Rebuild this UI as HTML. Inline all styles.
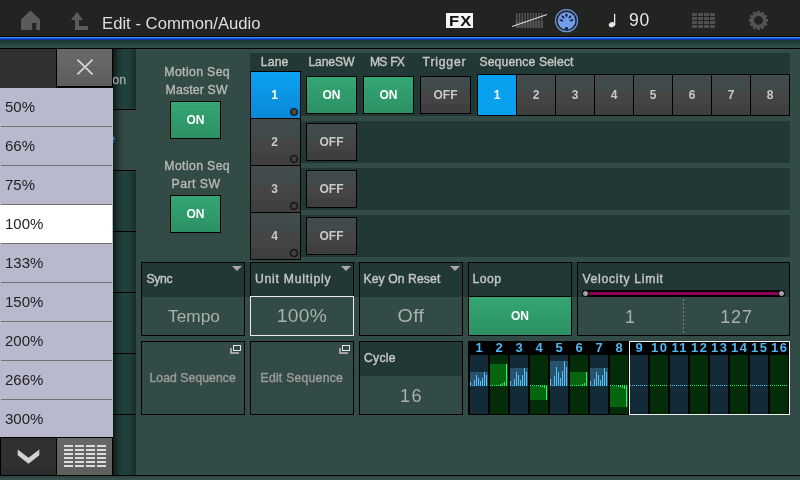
<!DOCTYPE html>
<html>
<head>
<meta charset="utf-8">
<title>Edit - Common/Audio</title>
<style>
*{box-sizing:border-box;margin:0;padding:0}
html,body{width:800px;height:480px;overflow:hidden;background:#324b47;font-family:"Liberation Sans",sans-serif;}
.a{position:absolute}
.t{position:absolute;white-space:nowrap;line-height:1}
#hdr{left:0;top:0;width:800px;height:36px;background:#222421}
#hl1{left:0;top:36px;width:800px;height:1px;background:#000}
#hl2{left:0;top:37px;width:800px;height:3px;background:linear-gradient(#4a93f5,#1d63e6 45%,#07178a)}
#hl3{left:0;top:40px;width:800px;height:8px;background:linear-gradient(#1d362f,#2f4f4b)}
#hl4{left:0;top:48px;width:800px;height:1px;background:#000}
#bot1{left:0;top:475px;width:800px;height:1px;background:#000}
#bot2{left:0;top:476px;width:800px;height:4px;background:linear-gradient(#2b4440,#3a5350)}
/* tab column */
.tab{left:113px;width:23px;height:60px;background:linear-gradient(90deg,#0f1a18 0%,#1b3531 22%,#21413c 45%,#21403c 65%,#1d3733 85%,#172b28 100%)}
.tabl{left:113px;width:23px;height:1px;background:#000}
/* buttons */
.btn{position:absolute;border:1px solid #000;color:#fff;font-weight:bold;font-size:12px;text-align:center}
.gray{background:linear-gradient(#434c4d 0%,#40494a 42%,#454644 45%,#434443 73%,#3f403f 76%,#3e3e3e 100%);color:#c9c9c9}
.green{background:linear-gradient(#34a773,#2c9063)}
.blue{background:linear-gradient(#0ba2f2,#0a88d6)}
.panel{background:#213837}
.box{position:absolute;border:1px solid #000;background:#324b47}
.box .h{position:absolute;left:0;top:0;right:0;height:34px;background:#213837}
.lbl{color:#c6c6c2;-webkit-text-stroke:.4px #c6c6c2;font-weight:normal;font-size:12.2px}
.val{color:#a9b0ac;font-size:18px;letter-spacing:.8px}
.li{left:0;width:113px;height:38px;background:#b8b9cc}
.ls{left:1px;width:111px;height:1px;background:#707070}
.lt{left:5px;font-size:15px;color:#222}

.lbl2{-webkit-text-stroke:.35px #b9b9b4;color:#b9b9b4;font-size:12.3px;letter-spacing:.45px;text-align:center}
.lane{color:#fff;font-weight:bold;font-size:12px;text-align:center;line-height:46px;padding-right:2px}
.lane.gray{color:#c9c9c9}
.dot{position:absolute;right:2px;bottom:2px;width:8px;height:8px;border-radius:50%;border:1px solid #000;background:transparent}
.sq{top:75px;width:38px;height:40px;font-weight:bold;font-size:12px;text-align:center;line-height:40px;color:#fff}
.sq.gray{color:#c9c9c9}
.tri{position:absolute;right:2px;top:3px;width:0;height:0;border-left:5px solid transparent;border-right:5px solid transparent;border-top:5px solid #aaa8aa}
.knob{width:7px;height:7px;border-radius:50%;background:#a6a6a6;border:1px solid #000}
.pop{position:absolute;left:88px;top:3px}
.dim{color:#9b9b9b;-webkit-text-stroke:.4px #9b9b9b}
.sn{font-size:13px;font-weight:bold;color:#4fb8f2;text-align:center}
</style>
</head>
<body><div id="root" style="position:absolute;left:0;top:0;width:800px;height:480px;will-change:transform">
<!-- header -->
<div class="a" id="hdr"></div>
<div class="a" id="hl1"></div>
<div class="a" id="hl2"></div>
<div class="a" id="hl3"></div>
<div class="a" id="hl4"></div>
<div class="a" id="bot1"></div>
<div class="a" id="bot2"></div>

<svg class="a" style="left:0;top:0" width="800" height="37" viewBox="0 0 800 37">
  <!-- home -->
  <path d="M30.5 10.5 L40 19.5 V30 H36.2 V23 H32.2 V30 H21 V19.5 Z" fill="#5a5c59"/>
  <!-- up arrow -->
  <path d="M77 11.8 L83 20 H79 V26 H88 V30 H75 V20 H71 Z" fill="#5a5c59"/>
  <!-- FX -->
  <rect x="446" y="13" width="27" height="15" fill="#f4f4f4"/>
  <!-- keyboard icon -->
  <g fill="#535553"><rect x="516.00" y="13" width="1.5" height="8"/><rect x="515.70" y="21" width="2.2" height="7"/><rect x="518.78" y="13" width="1.5" height="8"/><rect x="518.48" y="21" width="2.2" height="7"/><rect x="521.56" y="13" width="1.5" height="8"/><rect x="521.26" y="21" width="2.2" height="7"/><rect x="524.34" y="13" width="1.5" height="8"/><rect x="524.04" y="21" width="2.2" height="7"/><rect x="527.12" y="13" width="1.5" height="8"/><rect x="526.82" y="21" width="2.2" height="7"/><rect x="529.90" y="13" width="1.5" height="8"/><rect x="529.60" y="21" width="2.2" height="7"/><rect x="532.68" y="13" width="1.5" height="8"/><rect x="532.38" y="21" width="2.2" height="7"/><rect x="535.46" y="13" width="1.5" height="8"/><rect x="535.16" y="21" width="2.2" height="7"/><rect x="538.24" y="13" width="1.5" height="8"/><rect x="537.94" y="21" width="2.2" height="7"/><rect x="541.02" y="13" width="1.5" height="8"/><rect x="540.72" y="21" width="2.2" height="7"/></g>
  <line x1="512" y1="26.5" x2="547" y2="14.5" stroke="#d8d8d8" stroke-width="1.3"/>
  <!-- midi -->
  <circle cx="566.5" cy="20.7" r="11" fill="none" stroke="#6797e2" stroke-width="1.2"/>
  <circle cx="566.5" cy="20.7" r="8.8" fill="#6f9fec"/>
  <g fill="#141c33">
    <polygon points="566.50,12.80 567.65,15.30 566.50,17.80 565.35,15.30"/><polygon points="561.33,15.14 563.85,16.23 564.67,18.86 562.15,17.77"/><polygon points="571.67,15.14 570.85,17.77 568.33,18.86 569.15,16.23"/><polygon points="559.12,19.56 561.76,19.21 563.68,21.04 561.04,21.39"/><polygon points="573.88,19.56 571.96,21.39 569.32,21.04 571.24,19.21"/>
    <rect x="564.9" y="27.3" width="3.1" height="2.3"/>
  </g>
  <!-- note -->
  <ellipse cx="612" cy="24.6" rx="3.3" ry="2.5" fill="#e6e6e6" transform="rotate(-20 612 24.6)"/>
  <rect x="614" y="13.8" width="1.3" height="11" fill="#e6e6e6"/>
  <!-- grid -->
  <g fill="#4e504e">
    <rect x="692" y="13" width="5" height="3"/><rect x="698" y="13" width="5" height="3"/><rect x="704" y="13" width="5" height="3"/><rect x="710" y="13" width="5" height="3"/>
    <rect x="692" y="17" width="5" height="3"/><rect x="698" y="17" width="5" height="3"/><rect x="704" y="17" width="5" height="3"/><rect x="710" y="17" width="5" height="3"/>
    <rect x="692" y="21" width="5" height="3"/><rect x="698" y="21" width="5" height="3"/><rect x="704" y="21" width="5" height="3"/><rect x="710" y="21" width="5" height="3"/>
    <rect x="692" y="25" width="5" height="3"/><rect x="698" y="25" width="5" height="3"/><rect x="704" y="25" width="5" height="3"/><rect x="710" y="25" width="5" height="3"/>
  </g>
  <!-- gear -->
  <g transform="translate(758.5 20.4)">
    <circle r="6.3" fill="none" stroke="#525452" stroke-width="3.6"/>
    <g fill="#525452">
      <rect x="-1.4" y="-9.6" width="2.8" height="3"/>
      <rect x="-1.4" y="-9.6" width="2.8" height="3" transform="rotate(30)"/>
      <rect x="-1.4" y="-9.6" width="2.8" height="3" transform="rotate(60)"/>
      <rect x="-1.4" y="-9.6" width="2.8" height="3" transform="rotate(90)"/>
      <rect x="-1.4" y="-9.6" width="2.8" height="3" transform="rotate(120)"/>
      <rect x="-1.4" y="-9.6" width="2.8" height="3" transform="rotate(150)"/>
      <rect x="-1.4" y="-9.6" width="2.8" height="3" transform="rotate(180)"/>
      <rect x="-1.4" y="-9.6" width="2.8" height="3" transform="rotate(210)"/>
      <rect x="-1.4" y="-9.6" width="2.8" height="3" transform="rotate(240)"/>
      <rect x="-1.4" y="-9.6" width="2.8" height="3" transform="rotate(270)"/>
      <rect x="-1.4" y="-9.6" width="2.8" height="3" transform="rotate(300)"/>
      <rect x="-1.4" y="-9.6" width="2.8" height="3" transform="rotate(330)"/>
    </g>
  </g>
</svg>
<div class="t" id="title" style="left:102px;top:16px;font-size:16.7px;color:#dedede">Edit - Common/Audio</div>
<div class="t" id="fx" style="left:448.6px;top:12.6px;font-size:15.3px;font-weight:bold;color:#111;letter-spacing:1px;transform:scaleX(1.08);transform-origin:0 0">FX</div>
<div class="t" id="tempo" style="left:629px;top:12px;font-size:17.5px;letter-spacing:0.8px;color:#e8e8e8">90</div>

<!-- tab column behind popup -->
<div class="a tab" style="top:49px"></div>
<div class="a tabl" style="top:109px"></div>
<div class="a" style="left:113px;top:110px;width:10px;height:60px;background:linear-gradient(90deg,#16231f,#324b47)"></div>
<div class="a tabl" style="top:170px"></div>
<div class="a tab" style="top:171px"></div>
<div class="a tabl" style="top:231px"></div>
<div class="a tab" style="top:232px"></div>
<div class="a tabl" style="top:292px"></div>
<div class="a tab" style="top:293px"></div>
<div class="a tabl" style="top:353px"></div>
<div class="a tab" style="top:354px"></div>
<div class="a tabl" style="top:414px"></div>
<div class="a tab" style="top:415px"></div>
<div class="t" style="left:112.3px;top:73.5px;font-size:12.4px;color:#a0a5a1;-webkit-text-stroke:.3px #a0a5a1">on</div>
<div class="t" style="left:108px;top:132px;font-size:13px;color:#2f8fd0">e</div>

<!-- popup list -->
<div class="a" style="left:0;top:49px;width:56px;height:38px;background:#303030"></div>
<div class="a" style="left:56px;top:49px;width:57px;height:38px;background:#000"></div>
<div class="a" style="left:57px;top:49px;width:55px;height:37px;background:linear-gradient(#666866 0%,#656765 47%,#636263 49%,#636263 73%,#5f605e 75%,#5f605e 100%)"></div>
<div class="a" style="left:0;top:87px;width:56px;height:1px;background:#2e2e2e"></div><div class="a" style="left:56px;top:87px;width:57px;height:1px;background:#0a0a0a"></div>
<svg class="a" style="left:57px;top:49px" width="55" height="37" viewBox="0 0 55 37"><path d="M20.4 10.6 L35.6 25.4 M35.6 10.6 L20.4 25.4" stroke="#d4d4d4" stroke-width="1.8" fill="none"/></svg>

<div class="a" style="left:0;top:88px;width:113px;height:349px;background:#b8b9cc"></div>
<div class="a" style="left:0;top:205px;width:112px;height:38px;background:#fff"></div>
<div class="a ls" style="top:126px"></div>
<div class="a ls" style="top:165px"></div>
<div class="a ls" style="top:204px"></div>
<div class="a ls" style="top:243px"></div>
<div class="a ls" style="top:282px"></div>
<div class="a ls" style="top:321px"></div>
<div class="a ls" style="top:360px"></div>
<div class="a ls" style="top:399px"></div>
<div class="t lt" style="top:99px">50%</div>
<div class="t lt" style="top:138px">66%</div>
<div class="t lt" style="top:177px">75%</div>
<div class="t lt" style="top:216px">100%</div>
<div class="t lt" style="top:255px">133%</div>
<div class="t lt" style="top:294px">150%</div>
<div class="t lt" style="top:333px">200%</div>
<div class="t lt" style="top:372px">266%</div>
<div class="t lt" style="top:411px">300%</div>

<div class="a" style="left:0;top:437px;width:113px;height:38px;background:#000"></div>
<div class="a" style="left:1px;top:438px;width:55px;height:37px;background:linear-gradient(#303030 0%,#303030 84%,#2b2b2b 86%,#2b2b2b 100%)"></div>
<div class="a" style="left:57px;top:438px;width:55px;height:37px;background:linear-gradient(#666866 0%,#656765 47%,#636263 49%,#636263 73%,#5f605e 75%,#5f605e 100%)"></div>
<svg class="a" style="left:0;top:438px" width="113" height="37" viewBox="0 0 113 37">
  <path d="M17.7 11.6 L28.5 19.8 L39.3 11.6 V17.3 L28.5 25.8 L17.7 17.3 Z" fill="#d2d2d2"/>
  <g fill="#dcdcdc">
    <rect x="64" y="7" width="9" height="2"/><rect x="75" y="7" width="9" height="2"/><rect x="86" y="7" width="9" height="2"/><rect x="97" y="7" width="9" height="2"/>
    <rect x="64" y="11" width="9" height="2"/><rect x="75" y="11" width="9" height="2"/><rect x="86" y="11" width="9" height="2"/><rect x="97" y="11" width="9" height="2"/>
    <rect x="64" y="15" width="9" height="2"/><rect x="75" y="15" width="9" height="2"/><rect x="86" y="15" width="9" height="2"/><rect x="97" y="15" width="9" height="2"/>
    <rect x="64" y="19" width="9" height="2"/><rect x="75" y="19" width="9" height="2"/><rect x="86" y="19" width="9" height="2"/><rect x="97" y="19" width="9" height="2"/>
    <rect x="64" y="23" width="9" height="2"/><rect x="75" y="23" width="9" height="2"/><rect x="86" y="23" width="9" height="2"/><rect x="97" y="23" width="9" height="2"/>
    <rect x="64" y="27" width="9" height="2"/><rect x="75" y="27" width="9" height="2"/><rect x="86" y="27" width="9" height="2"/><rect x="97" y="27" width="9" height="2"/>
  </g>
</svg>

<!-- MAIN -->
<div class="a" style="left:136px;top:49px;width:664px;height:3px;background:linear-gradient(#37534e,#324b47)"></div>
<!-- labels left -->
<div class="t lbl2" style="left:147.2px;width:100px;top:66px;letter-spacing:.35px">Motion Seq</div>
<div class="t lbl2" style="left:146.6px;width:100px;top:84px;letter-spacing:.15px">Master SW</div>
<div class="btn green" style="left:170px;top:101px;width:51px;height:38px;line-height:36px">ON</div>
<div class="t lbl2" style="left:147.2px;width:100px;top:160px;letter-spacing:.35px">Motion Seq</div>
<div class="t lbl2" style="left:146px;width:100px;top:178px">Part SW</div>
<div class="btn green" style="left:170px;top:195px;width:51px;height:38px;line-height:36px">ON</div>

<!-- lane panel rows -->
<div class="a panel" style="left:250px;top:53px;width:540px;height:63px"></div>
<div class="a panel" style="left:250px;top:121px;width:540px;height:42px"></div>
<div class="a panel" style="left:250px;top:168px;width:540px;height:42px"></div>
<div class="a panel" style="left:250px;top:215px;width:540px;height:42px"></div>

<div class="t lbl" style="left:260.7px;top:56.2px;letter-spacing:.2px">Lane</div>
<div class="t lbl" style="left:308.4px;top:56.2px;letter-spacing:-.15px">LaneSW</div>
<div class="t lbl" style="left:369.9px;top:56.2px;letter-spacing:-.9px;word-spacing:1.4px">MS FX</div>
<div class="t lbl" style="left:422.6px;top:56.2px;letter-spacing:.8px">Trigger</div>
<div class="t lbl" style="left:479.4px;top:56.2px;letter-spacing:.14px">Sequence Select</div>

<div class="a" style="left:250px;top:71px;width:51px;height:189px;background:#000"></div>
<div class="a blue lane" style="left:251px;top:72px;width:49px;height:46px"><span>1</span><i class="dot" style="background:#484848"></i></div>
<div class="a gray lane" style="left:251px;top:119px;width:49px;height:46px"><span>2</span><i class="dot"></i></div>
<div class="a gray lane" style="left:251px;top:166px;width:49px;height:46px"><span>3</span><i class="dot"></i></div>
<div class="a gray lane" style="left:251px;top:213px;width:49px;height:46px"><span>4</span><i class="dot"></i></div>

<div class="btn green" style="left:306px;top:76px;width:51px;height:38px;line-height:36px">ON</div>
<div class="btn green" style="left:363px;top:76px;width:51px;height:38px;line-height:36px">ON</div>
<div class="btn gray" style="left:420px;top:76px;width:51px;height:38px;line-height:36px">OFF</div>
<div class="btn gray" style="left:306px;top:123px;width:51px;height:38px;line-height:36px">OFF</div>
<div class="btn gray" style="left:306px;top:170px;width:51px;height:38px;line-height:36px">OFF</div>
<div class="btn gray" style="left:306px;top:217px;width:51px;height:38px;line-height:36px">OFF</div>

<div class="a" style="left:477px;top:74px;width:313px;height:42px;background:#000"></div>
<div class="a blue sq" style="left:478px;background:#08a1ee">1</div>
<div class="a gray sq" style="left:517px">2</div>
<div class="a gray sq" style="left:556px">3</div>
<div class="a gray sq" style="left:595px">4</div>
<div class="a gray sq" style="left:634px">5</div>
<div class="a gray sq" style="left:673px">6</div>
<div class="a gray sq" style="left:712px">7</div>
<div class="a gray sq" style="left:751px">8</div>

<!-- parameter boxes row 1 -->
<div class="a" style="left:141px;top:262px;width:649px;height:35px;background:#233b39"></div>
<div class="box" style="left:141px;top:262px;width:104px;height:74px"><div class="h"></div>
  <div class="t lbl" style="left:4.6px;top:10.3px;letter-spacing:-0.37px">Sync</div><i class="tri"></i>
  <div class="t val" style="left:0;width:102px;text-align:center;top:45px;font-size:17.3px;letter-spacing:0;padding-left:2px">Tempo</div></div>
<div class="box" style="left:250px;top:262px;width:104px;height:74px"><div class="h"></div>
  <div class="t lbl" style="left:3.9px;top:10.3px;letter-spacing:0.78px">Unit Multiply</div><i class="tri"></i>
  <div class="a" style="left:-1px;top:33px;width:104px;height:40px;border:1.5px solid #ececec"></div>
  <div class="t val" style="left:0;width:102px;text-align:center;top:45px;font-size:17.5px;letter-spacing:.3px;transform:scaleX(1.1)">100%</div></div>
<div class="box" style="left:359px;top:262px;width:104px;height:74px"><div class="h"></div>
  <div class="t lbl" style="left:3.45px;top:10.3px;letter-spacing:0.09px">Key On Reset</div><i class="tri"></i>
  <div class="t val" style="left:0;width:102px;text-align:center;top:45px;font-size:17.5px;letter-spacing:.3px;transform:scaleX(1.12)">Off</div></div>
<div class="box" style="left:468px;top:262px;width:104px;height:74px"><div class="h" style="height:33px"></div>
  <div class="t lbl" style="left:3.6px;top:10.3px;letter-spacing:0.4px">Loop</div>
  <div class="a" style="left:0;top:33px;width:102px;height:1px;background:#000"></div>
  <div class="a green" style="left:0;top:34px;width:102px;height:38px;color:#fff;font-weight:bold;font-size:12px;text-align:center;line-height:38px">ON</div></div>
<div class="box" style="left:577px;top:262px;width:213px;height:74px"><div class="h"></div>
  <div class="t lbl" style="left:4.4px;top:10.3px;letter-spacing:0.73px">Velocity Limit</div>
  <div class="a" style="left:4px;top:27px;width:203px;height:7px;background:#000;border-radius:3px"></div>
  <div class="a" style="left:11px;top:29px;width:190px;height:3px;background:#8b0059"></div>
  <div class="a knob" style="left:4px;top:27px"></div>
  <div class="a knob" style="left:200px;top:27px"></div>
  <div class="a" style="left:105px;top:36px;width:1px;height:34px;background:repeating-linear-gradient(#8a8383 0,#8a8383 2px,transparent 2px,transparent 4px)"></div>
  <div class="t val" style="left:0;width:105px;text-align:center;top:45px">1</div>
  <div class="t val" style="left:106px;width:105px;text-align:center;top:45px">127</div></div>

<!-- row 2 -->
<div class="box" style="left:141px;top:341px;width:104px;height:74px">
  <div class="t lbl dim" style="left:7.5px;top:30.4px;letter-spacing:.07px">Load Sequence</div><svg class="pop" width="12" height="10" viewBox="0 0 12 10"><path d="M0 3H2V7H9V9H0Z" fill="#a8a2a2"/><rect x="3.5" y="0.5" width="7" height="5" fill="none" stroke="#e4e4e4" stroke-width="1"/></svg></div>
<div class="box" style="left:250px;top:341px;width:104px;height:74px">
  <div class="t lbl dim" style="left:9.5px;top:30.4px;letter-spacing:.25px">Edit Sequence</div><svg class="pop" width="12" height="10" viewBox="0 0 12 10"><path d="M0 3H2V7H9V9H0Z" fill="#a8a2a2"/><rect x="3.5" y="0.5" width="7" height="5" fill="none" stroke="#e4e4e4" stroke-width="1"/></svg></div>
<div class="box" style="left:359px;top:341px;width:104px;height:74px"><div class="h"></div>
  <div class="t lbl" style="left:4px;top:10.3px;letter-spacing:0.25px">Cycle</div>
  <div class="t val" style="left:0;width:102px;text-align:center;top:45px;letter-spacing:1.6px;padding-left:1px">16</div></div>

<!-- sequence display -->
<!--SEQ--><svg class="a" style="left:468px;top:341px" width="322" height="74" viewBox="0 0 322 74" shape-rendering="crispEdges">
<rect x="0" y="0" width="322" height="74" fill="#000"/>
<rect x="2" y="14" width="18" height="59" fill="#132b36"/>
<rect x="2" y="31" width="18" height="14" fill="#26546e"/>
<rect x="2" y="41" width="1.2" height="4" fill="#56c1f5"/>
<rect x="4" y="44" width="1.2" height="1" fill="#56c1f5"/>
<rect x="6" y="39" width="1.2" height="6" fill="#56c1f5"/>
<rect x="8" y="34" width="1.2" height="11" fill="#56c1f5"/>
<rect x="10" y="37" width="1.2" height="8" fill="#56c1f5"/>
<rect x="12" y="40" width="1.2" height="5" fill="#56c1f5"/>
<rect x="14" y="37" width="1.2" height="8" fill="#56c1f5"/>
<rect x="16" y="31" width="1.2" height="14" fill="#56c1f5"/>
<rect x="18" y="34" width="1.2" height="11" fill="#56c1f5"/>
<rect x="22" y="14" width="18" height="59" fill="#032d09"/>
<rect x="22" y="23" width="18" height="22" fill="#04660f"/>
<rect x="22" y="44" width="1.2" height="1" fill="#2fe873"/>
<rect x="24" y="44" width="1.2" height="1" fill="#2fe873"/>
<rect x="26" y="44" width="1.2" height="1" fill="#2fe873"/>
<rect x="28" y="44" width="1.2" height="1" fill="#2fe873"/>
<rect x="30" y="43.5" width="1.2" height="1.5" fill="#2fe873"/>
<rect x="32" y="43" width="1.2" height="2" fill="#2fe873"/>
<rect x="34" y="42" width="1.2" height="3" fill="#2fe873"/>
<rect x="36" y="41" width="1.2" height="4" fill="#2fe873"/>
<rect x="38" y="23" width="1.2" height="22" fill="#2fe873"/>
<rect x="42" y="14" width="18" height="59" fill="#132b36"/>
<rect x="42" y="27" width="18" height="18" fill="#26546e"/>
<rect x="42" y="40" width="1.2" height="5" fill="#56c1f5"/>
<rect x="44" y="44" width="1.2" height="1" fill="#56c1f5"/>
<rect x="46" y="38" width="1.2" height="7" fill="#56c1f5"/>
<rect x="48" y="31" width="1.2" height="14" fill="#56c1f5"/>
<rect x="50" y="34" width="1.2" height="11" fill="#56c1f5"/>
<rect x="52" y="39" width="1.2" height="6" fill="#56c1f5"/>
<rect x="54" y="34" width="1.2" height="11" fill="#56c1f5"/>
<rect x="56" y="27" width="1.2" height="18" fill="#56c1f5"/>
<rect x="58" y="31" width="1.2" height="14" fill="#56c1f5"/>
<rect x="62" y="14" width="18" height="59" fill="#032d09"/>
<rect x="62" y="45" width="18" height="14" fill="#04660f"/>
<rect x="62" y="44" width="1.2" height="1" fill="#2fe873"/>
<rect x="64" y="44" width="1.2" height="1" fill="#2fe873"/>
<rect x="66" y="44" width="1.2" height="1" fill="#2fe873"/>
<rect x="68" y="44" width="1.2" height="1" fill="#2fe873"/>
<rect x="70" y="44" width="1.2" height="1" fill="#2fe873"/>
<rect x="72" y="44" width="1.2" height="2" fill="#2fe873"/>
<rect x="74" y="44" width="1.2" height="2" fill="#2fe873"/>
<rect x="76" y="44" width="1.2" height="3" fill="#2fe873"/>
<rect x="78" y="44" width="1.2" height="15" fill="#2fe873"/>
<rect x="82" y="14" width="18" height="59" fill="#132b36"/>
<rect x="82" y="20" width="18" height="25" fill="#26546e"/>
<rect x="82" y="38" width="1.2" height="7" fill="#56c1f5"/>
<rect x="84" y="44" width="1.2" height="1" fill="#56c1f5"/>
<rect x="86" y="35" width="1.2" height="10" fill="#56c1f5"/>
<rect x="88" y="26" width="1.2" height="19" fill="#56c1f5"/>
<rect x="90" y="31" width="1.2" height="14" fill="#56c1f5"/>
<rect x="92" y="37" width="1.2" height="8" fill="#56c1f5"/>
<rect x="94" y="30" width="1.2" height="15" fill="#56c1f5"/>
<rect x="96" y="20" width="1.2" height="25" fill="#56c1f5"/>
<rect x="98" y="26" width="1.2" height="19" fill="#56c1f5"/>
<rect x="102" y="14" width="18" height="59" fill="#032d09"/>
<rect x="102" y="31" width="18" height="14" fill="#04660f"/>
<rect x="102" y="44" width="1.2" height="1" fill="#2fe873"/>
<rect x="104" y="44" width="1.2" height="1" fill="#2fe873"/>
<rect x="106" y="44" width="1.2" height="1" fill="#2fe873"/>
<rect x="108" y="44" width="1.2" height="1" fill="#2fe873"/>
<rect x="110" y="44" width="1.2" height="1" fill="#2fe873"/>
<rect x="112" y="43.5" width="1.2" height="1.5" fill="#2fe873"/>
<rect x="114" y="43" width="1.2" height="2" fill="#2fe873"/>
<rect x="116" y="42" width="1.2" height="3" fill="#2fe873"/>
<rect x="118" y="31" width="1.2" height="14" fill="#2fe873"/>
<rect x="122" y="14" width="18" height="59" fill="#132b36"/>
<rect x="122" y="27" width="18" height="18" fill="#26546e"/>
<rect x="122" y="40" width="1.2" height="5" fill="#56c1f5"/>
<rect x="124" y="44" width="1.2" height="1" fill="#56c1f5"/>
<rect x="126" y="38" width="1.2" height="7" fill="#56c1f5"/>
<rect x="128" y="31" width="1.2" height="14" fill="#56c1f5"/>
<rect x="130" y="34" width="1.2" height="11" fill="#56c1f5"/>
<rect x="132" y="39" width="1.2" height="6" fill="#56c1f5"/>
<rect x="134" y="34" width="1.2" height="11" fill="#56c1f5"/>
<rect x="136" y="27" width="1.2" height="18" fill="#56c1f5"/>
<rect x="138" y="31" width="1.2" height="14" fill="#56c1f5"/>
<rect x="142" y="14" width="18" height="59" fill="#032d09"/>
<rect x="142" y="45" width="18" height="21" fill="#04660f"/>
<rect x="142" y="44" width="1.2" height="1" fill="#2fe873"/>
<rect x="144" y="44" width="1.2" height="1" fill="#2fe873"/>
<rect x="146" y="44" width="1.2" height="1" fill="#2fe873"/>
<rect x="148" y="44" width="1.2" height="1" fill="#2fe873"/>
<rect x="150" y="44" width="1.2" height="2" fill="#2fe873"/>
<rect x="152" y="44" width="1.2" height="2" fill="#2fe873"/>
<rect x="154" y="44" width="1.2" height="3" fill="#2fe873"/>
<rect x="156" y="44" width="1.2" height="4" fill="#2fe873"/>
<rect x="158" y="44" width="1.2" height="22" fill="#2fe873"/>
<rect x="162" y="14" width="18" height="59" fill="#132b36"/>
<rect x="162" y="44" width="1" height="1" fill="#56c1f5"/>
<rect x="164" y="44" width="1" height="1" fill="#56c1f5"/>
<rect x="166" y="44" width="1" height="1" fill="#56c1f5"/>
<rect x="168" y="44" width="1" height="1" fill="#56c1f5"/>
<rect x="170" y="44" width="1" height="1" fill="#56c1f5"/>
<rect x="172" y="44" width="1" height="1" fill="#56c1f5"/>
<rect x="174" y="44" width="1" height="1" fill="#56c1f5"/>
<rect x="176" y="44" width="1" height="1" fill="#56c1f5"/>
<rect x="178" y="44" width="1" height="1" fill="#56c1f5"/>
<rect x="182" y="14" width="18" height="59" fill="#032d09"/>
<rect x="182" y="44" width="1" height="1" fill="#2fe873"/>
<rect x="184" y="44" width="1" height="1" fill="#2fe873"/>
<rect x="186" y="44" width="1" height="1" fill="#2fe873"/>
<rect x="188" y="44" width="1" height="1" fill="#2fe873"/>
<rect x="190" y="44" width="1" height="1" fill="#2fe873"/>
<rect x="192" y="44" width="1" height="1" fill="#2fe873"/>
<rect x="194" y="44" width="1" height="1" fill="#2fe873"/>
<rect x="196" y="44" width="1" height="1" fill="#2fe873"/>
<rect x="198" y="44" width="1" height="1" fill="#2fe873"/>
<rect x="202" y="14" width="18" height="59" fill="#132b36"/>
<rect x="202" y="44" width="1" height="1" fill="#56c1f5"/>
<rect x="204" y="44" width="1" height="1" fill="#56c1f5"/>
<rect x="206" y="44" width="1" height="1" fill="#56c1f5"/>
<rect x="208" y="44" width="1" height="1" fill="#56c1f5"/>
<rect x="210" y="44" width="1" height="1" fill="#56c1f5"/>
<rect x="212" y="44" width="1" height="1" fill="#56c1f5"/>
<rect x="214" y="44" width="1" height="1" fill="#56c1f5"/>
<rect x="216" y="44" width="1" height="1" fill="#56c1f5"/>
<rect x="218" y="44" width="1" height="1" fill="#56c1f5"/>
<rect x="222" y="14" width="18" height="59" fill="#032d09"/>
<rect x="222" y="44" width="1" height="1" fill="#2fe873"/>
<rect x="224" y="44" width="1" height="1" fill="#2fe873"/>
<rect x="226" y="44" width="1" height="1" fill="#2fe873"/>
<rect x="228" y="44" width="1" height="1" fill="#2fe873"/>
<rect x="230" y="44" width="1" height="1" fill="#2fe873"/>
<rect x="232" y="44" width="1" height="1" fill="#2fe873"/>
<rect x="234" y="44" width="1" height="1" fill="#2fe873"/>
<rect x="236" y="44" width="1" height="1" fill="#2fe873"/>
<rect x="238" y="44" width="1" height="1" fill="#2fe873"/>
<rect x="242" y="14" width="18" height="59" fill="#132b36"/>
<rect x="242" y="44" width="1" height="1" fill="#56c1f5"/>
<rect x="244" y="44" width="1" height="1" fill="#56c1f5"/>
<rect x="246" y="44" width="1" height="1" fill="#56c1f5"/>
<rect x="248" y="44" width="1" height="1" fill="#56c1f5"/>
<rect x="250" y="44" width="1" height="1" fill="#56c1f5"/>
<rect x="252" y="44" width="1" height="1" fill="#56c1f5"/>
<rect x="254" y="44" width="1" height="1" fill="#56c1f5"/>
<rect x="256" y="44" width="1" height="1" fill="#56c1f5"/>
<rect x="258" y="44" width="1" height="1" fill="#56c1f5"/>
<rect x="262" y="14" width="18" height="59" fill="#032d09"/>
<rect x="262" y="44" width="1" height="1" fill="#2fe873"/>
<rect x="264" y="44" width="1" height="1" fill="#2fe873"/>
<rect x="266" y="44" width="1" height="1" fill="#2fe873"/>
<rect x="268" y="44" width="1" height="1" fill="#2fe873"/>
<rect x="270" y="44" width="1" height="1" fill="#2fe873"/>
<rect x="272" y="44" width="1" height="1" fill="#2fe873"/>
<rect x="274" y="44" width="1" height="1" fill="#2fe873"/>
<rect x="276" y="44" width="1" height="1" fill="#2fe873"/>
<rect x="278" y="44" width="1" height="1" fill="#2fe873"/>
<rect x="282" y="14" width="18" height="59" fill="#132b36"/>
<rect x="282" y="44" width="1" height="1" fill="#56c1f5"/>
<rect x="284" y="44" width="1" height="1" fill="#56c1f5"/>
<rect x="286" y="44" width="1" height="1" fill="#56c1f5"/>
<rect x="288" y="44" width="1" height="1" fill="#56c1f5"/>
<rect x="290" y="44" width="1" height="1" fill="#56c1f5"/>
<rect x="292" y="44" width="1" height="1" fill="#56c1f5"/>
<rect x="294" y="44" width="1" height="1" fill="#56c1f5"/>
<rect x="296" y="44" width="1" height="1" fill="#56c1f5"/>
<rect x="298" y="44" width="1" height="1" fill="#56c1f5"/>
<rect x="302" y="14" width="18" height="59" fill="#032d09"/>
<rect x="302" y="44" width="1" height="1" fill="#2fe873"/>
<rect x="304" y="44" width="1" height="1" fill="#2fe873"/>
<rect x="306" y="44" width="1" height="1" fill="#2fe873"/>
<rect x="308" y="44" width="1" height="1" fill="#2fe873"/>
<rect x="310" y="44" width="1" height="1" fill="#2fe873"/>
<rect x="312" y="44" width="1" height="1" fill="#2fe873"/>
<rect x="314" y="44" width="1" height="1" fill="#2fe873"/>
<rect x="316" y="44" width="1" height="1" fill="#2fe873"/>
<rect x="318" y="44" width="1" height="1" fill="#2fe873"/>
<rect x="161.7" y="0.7" width="159.6" height="72.6" fill="none" stroke="#f0f0f0" stroke-width="1.4"/>
</svg>
<div class="t sn" style="left:464px;top:341.4px;width:30px">1</div>
<div class="t sn" style="left:484px;top:341.4px;width:30px">2</div>
<div class="t sn" style="left:504px;top:341.4px;width:30px">3</div>
<div class="t sn" style="left:524px;top:341.4px;width:30px">4</div>
<div class="t sn" style="left:544px;top:341.4px;width:30px">5</div>
<div class="t sn" style="left:564px;top:341.4px;width:30px">6</div>
<div class="t sn" style="left:584px;top:341.4px;width:30px">7</div>
<div class="t sn" style="left:604px;top:341.4px;width:30px">8</div>
<div class="t sn" style="left:624px;top:341.4px;width:30px">9</div>
<div class="t sn" style="left:644px;top:341.4px;width:30px;letter-spacing:1.3px;padding-left:1.3px">10</div>
<div class="t sn" style="left:664px;top:341.4px;width:30px;letter-spacing:1.3px;padding-left:1.3px">11</div>
<div class="t sn" style="left:684px;top:341.4px;width:30px;letter-spacing:1.3px;padding-left:1.3px">12</div>
<div class="t sn" style="left:704px;top:341.4px;width:30px;letter-spacing:1.3px;padding-left:1.3px">13</div>
<div class="t sn" style="left:724px;top:341.4px;width:30px;letter-spacing:1.3px;padding-left:1.3px">14</div>
<div class="t sn" style="left:744px;top:341.4px;width:30px;letter-spacing:1.3px;padding-left:1.3px">15</div>
<div class="t sn" style="left:764px;top:341.4px;width:30px;letter-spacing:1.3px;padding-left:1.3px">16</div><!--/SEQ-->

</div></body>
</html>
